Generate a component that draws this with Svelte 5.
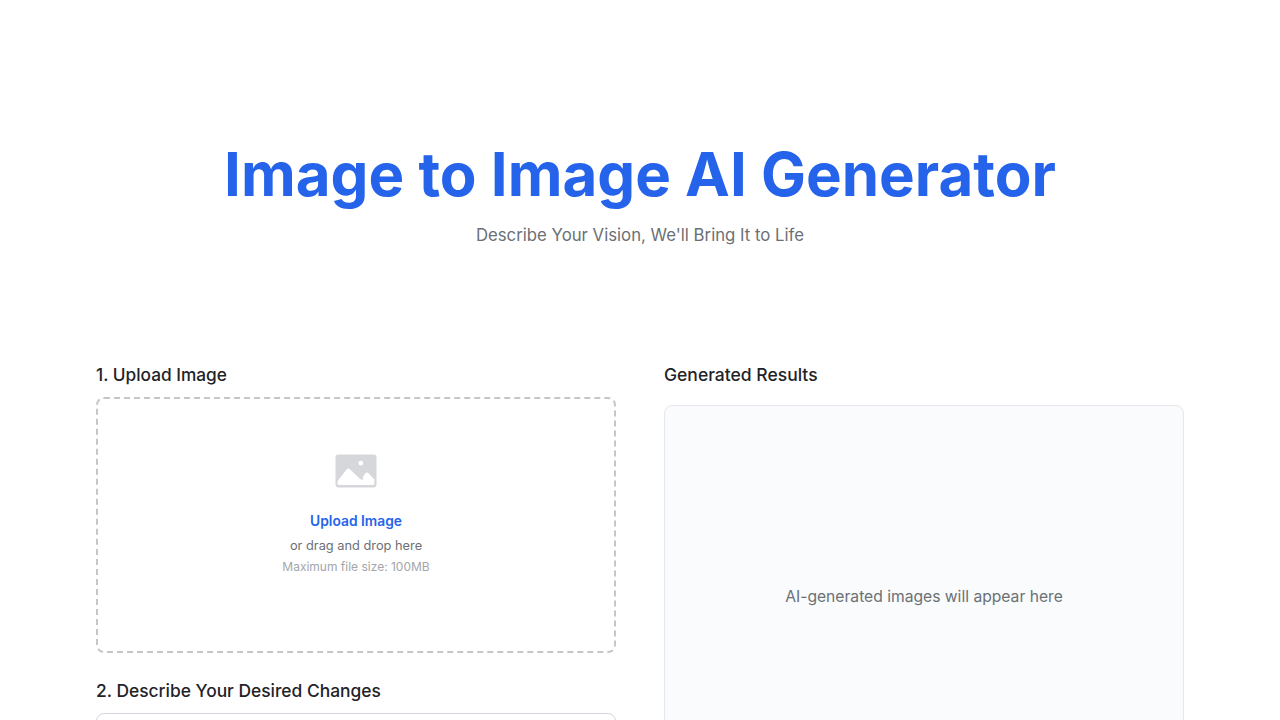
<script>
  let prompt = "";
</script>

<main>
  <section class="hero">
    <h1>Image to Image AI Generator</h1>
    <p class="tagline">Describe Your Vision, We'll Bring It to Life</p>
  </section>

  <div class="columns">
    <div class="left">
      <h2 class="first">1. Upload Image</h2>
      <div class="dropzone">
        <svg class="upload-icon" viewBox="0 0 42 34" width="42" height="34" aria-hidden="true">
          <path fill-rule="evenodd" d="M3.5 0.5h35a3 3 0 0 1 3 3v27a3 3 0 0 1-3 3h-35a3 3 0 0 1-3-3v-27a3 3 0 0 1 3-3zM2.6 27L11.6 15.4Q13.4 13.6 15.2 15.4L24.6 24.6Q27.4 26.8 28.4 25L27.6 23.6Q29 21 30.6 19Q32 17.8 33.4 19L39.4 25.5V29.4a1.6 1.6 0 0 1-1.6 1.6H4.2a1.6 1.6 0 0 1-1.6-1.6zM25.8 6.8a2.4 2.4 0 1 0 0 4.8a2.4 2.4 0 1 0 0-4.8z" />
        </svg>
        <span class="upload-link">Upload Image</span>
        <span class="upload-hint">or drag and drop here</span>
        <span class="upload-limit">Maximum file size: 100MB</span>
      </div>

      <h2 class="second">2. Describe Your Desired Changes</h2>
      <textarea bind:value={prompt} rows="4"></textarea>
    </div>

    <div class="right">
      <h2>Generated Results</h2>
      <div class="results">
        <p>AI-generated images will appear here</p>
      </div>
    </div>
  </div>
</main>

<style>
  :global(body) {
    margin: 0;
    background: #fff;
    overflow: hidden;
  }

  main {
    font-family: Inter, "Liberation Sans", sans-serif;
    color: #1f2328;
    height: 720px;
    overflow: hidden;
  }

  .hero {
    padding-top: 139px;
    text-align: center;
  }

  h1 {
    margin: 0;
    font-size: 60px;
    line-height: 70px;
    font-weight: 700;
    color: #2563eb;
  }

  .tagline {
    margin: 12px 0 0;
    font-size: 16.75px;
    line-height: 28px;
    color: #6b7075;
  }

  .columns {
    display: grid;
    grid-template-columns: 1fr 1fr;
    gap: 48px;
    width: 1088px;
    margin: 112px auto 0;
  }

  h2 {
    margin: 0;
    font-size: 17.5px;
    line-height: 28px;
    font-weight: 500;
  }

  .first {
    font-size: 17.25px;
  }

  .second {
    margin-top: 24px;
    font-size: 17.4px;
  }

  .dropzone {
    box-sizing: border-box;
    height: 256px;
    margin-top: 8px;
    border: 2px dashed #c4c6c9;
    border-radius: 8px;
    display: flex;
    flex-direction: column;
    align-items: center;
    padding-top: 55px;
  }

  .upload-icon {
    fill: #d5d7da;
  }

  .upload-link {
    margin-top: 23px;
    font-size: 13.8px;
    line-height: 20px;
    font-weight: 600;
    color: #2563eb;
  }

  .upload-hint {
    margin-top: 5px;
    font-size: 12.8px;
    line-height: 20px;
    color: #6b7075;
  }

  .upload-limit {
    margin-top: 3px;
    font-size: 12px;
    line-height: 16px;
    color: #a3a6aa;
  }

  textarea {
    display: block;
    box-sizing: border-box;
    width: 100%;
    height: 120px;
    margin-top: 8px;
    border: 1px solid #d1d5db;
    border-radius: 8px;
    resize: none;
    outline: none;
  }

  .results {
    box-sizing: border-box;
    height: 382px;
    margin-top: 16px;
    border: 1px solid #e5e7eb;
    border-radius: 8px;
    background: #f9fbfc;
    display: flex;
    align-items: center;
    justify-content: center;
  }

  .results p {
    margin: 0;
    font-size: 15.65px;
    color: #6b7075;
  }
</style>
